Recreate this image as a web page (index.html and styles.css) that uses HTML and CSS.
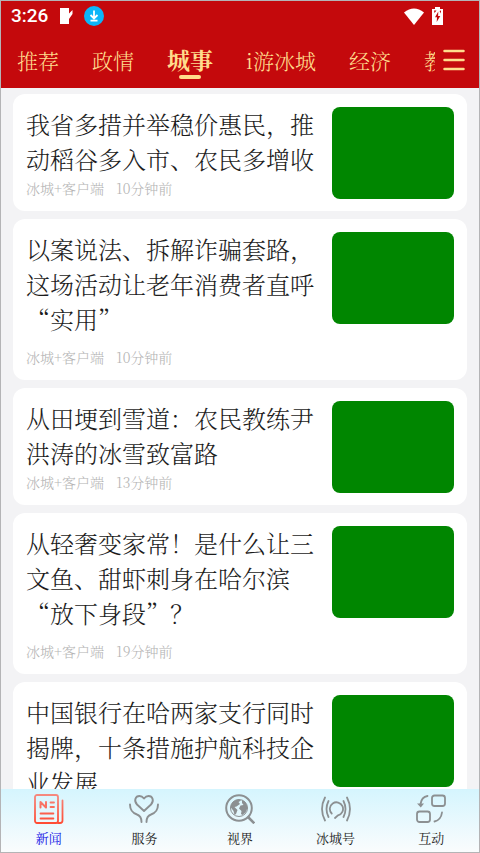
FILE: index.html
```html
<!DOCTYPE html>
<html lang="zh-CN">
<head>
<meta charset="utf-8">
<meta name="viewport" content="width=device-width, initial-scale=1">
<title>城事</title>
<link rel="stylesheet" href="styles.css">
</head>
<body>
<div class="app">
  <header class="header">
    <div class="status">
      <span class="clock">3:26</span>
      <svg class="status-note" viewBox="0 0 14 18" aria-hidden="true"><path d="M0 1h9v5.500L12.500 3v4L9 12v5H0z" fill="#fff"/></svg>
      <svg class="status-download" viewBox="0 0 20 20" aria-hidden="true"><circle cx="10" cy="10" r="10" fill="#0cb6f8"/><path d="M10 4.500v7.500M6.500 9l3.500 3.500L13.500 9M6.500 14.700h7" fill="none" stroke="#fff" stroke-width="1.800"/></svg>
      <svg class="status-wifi" viewBox="0 0 20 17" aria-hidden="true"><path d="M0 4.500Q10-3.500 20 4.500L10 17z" fill="#fff"/></svg>
      <svg class="status-battery" viewBox="0 0 11 18" aria-hidden="true"><path d="M3 0h5v2h3v16H0V2h3z" fill="#fff"/><path d="M2 3.500h2.500L2.500 6zM9 3.500v3L7.500 4zM6.300 4.500L3 10.200h2L4.700 15 8.300 8.900H6.100z" fill="#c4090c"/></svg>
    </div>
    <div class="channels">
      <nav class="tabs" aria-label="频道">
        <a class="tab" href="#">推荐</a>
        <a class="tab" href="#">政情</a>
        <a class="tab tab-active" href="#" aria-current="page">城事</a>
        <a class="tab" href="#">i游冰城</a>
        <a class="tab" href="#">经济</a>
        <a class="tab" href="#">教</a>
      </nav>
      <button class="menu" type="button" aria-label="菜单">
        <svg viewBox="0 0 22 22" aria-hidden="true"><path d="M1.500 2h19M1.500 11h19M1.500 20h19" stroke="#ffdc8c" stroke-width="2.500" stroke-linecap="round"/></svg>
      </button>
    </div>
  </header>

  <main class="feed">
    <article class="card">
      <div class="text">
        <h2 class="title">我省多措并举稳价惠民，推动稻谷多入市、农民多增收</h2>
        <p class="meta"><span>冰城+客户端</span><span>10分钟前</span></p>
      </div>
      <div class="thumb"></div>
    </article>
    <article class="card">
      <div class="text text-long">
        <h2 class="title">以案说法、拆解诈骗套路，这场活动让老年消费者直呼“实用”</h2>
        <p class="meta"><span>冰城+客户端</span><span>10分钟前</span></p>
      </div>
      <div class="thumb"></div>
    </article>
    <article class="card">
      <div class="text">
        <h2 class="title">从田埂到雪道：农民教练尹洪涛的冰雪致富路</h2>
        <p class="meta"><span>冰城+客户端</span><span>13分钟前</span></p>
      </div>
      <div class="thumb"></div>
    </article>
    <article class="card">
      <div class="text text-long">
        <h2 class="title">从轻奢变家常！是什么让三文鱼、甜虾刺身在哈尔滨“放下身段”？</h2>
        <p class="meta"><span>冰城+客户端</span><span>19分钟前</span></p>
      </div>
      <div class="thumb"></div>
    </article>
    <article class="card">
      <div class="text text-long">
        <h2 class="title">中国银行在哈两家支行同时揭牌，十条措施护航科技企业发展</h2>
      </div>
      <div class="thumb"></div>
    </article>
  </main>

  <nav class="dock" aria-label="主导航">
    <a class="dock-item dock-active" href="#" aria-current="page">
      <svg class="dock-icon" viewBox="0 0 30 30" aria-hidden="true">
        <defs><linearGradient id="news" x1="0" y1="0" x2="0" y2="30" gradientUnits="userSpaceOnUse"><stop stop-color="#f58a80"/><stop offset="1" stop-color="#ff4a32"/></linearGradient></defs>
        <g fill="none" stroke="url(#news)" stroke-width="1.800" stroke-linecap="round" stroke-linejoin="round"><rect x="1" y="1" width="23" height="28" rx="2"/><path d="M24 29h2q2.500 0 2.500-2.500V6.500M6.500 19.500h12.900M6.500 24.500h12.900M16.500 8.500h3.500M16.500 13h3.500"/><path d="M6.500 13.500V8l5.500 5.500V8" stroke-width="2"/></g>
      </svg>
      <span>新闻</span>
    </a>
    <a class="dock-item" href="#">
      <svg class="dock-icon" viewBox="0 0 30 30" aria-hidden="true">
        <g fill="none" stroke="#8c9092" stroke-width="1.900" stroke-linecap="round" stroke-linejoin="round"><path d="M15 17L8 10.500C4.500 6.500 6.500 2 10.500 2Q13 2 15 4.500 17 2 19.500 2C23.500 2 25.500 6.500 22 10.500z"/><path d="M1 10.500C1 17 4 19 8 20.500Q12.500 22 12.500 28M29 10.500C29 17 26 19 22 20.500Q17.500 22 17.500 28"/></g>
      </svg>
      <span>服务</span>
    </a>
    <a class="dock-item" href="#">
      <svg class="dock-icon" viewBox="0 0 30 30" aria-hidden="true">
        <g fill="none" stroke="#8c9092"><circle cx="14" cy="14" r="12.800" stroke-width="2"/><circle cx="14" cy="14" r="8.500" stroke-width="1"/><path d="M22.500 22.500L29.300 29.300" stroke-width="2.600"/></g>
        <path d="M5.500 13Q6.500 6.500 13.500 5.300l2.500 1.200-2.500 1.500 1.500 2-3.500 2.500-2 .5 3 3-1.500 4-1.500 1-1-4zM17 6Q22 8 22.500 14l-2 4.500-3 2.500-1.500-1 .5-3-2.500-2.500 1.500-3 3-.5-1.500-2z" fill="#8c9092"/>
      </svg>
      <span>视界</span>
    </a>
    <a class="dock-item" href="#">
      <svg class="dock-icon" viewBox="0 0 30 30" aria-hidden="true">
        <g fill="none" stroke="#8c9092" stroke-width="1.800" stroke-linecap="round"><path d="M10.700 19.500A6.600 6.600 0 1 1 17 21.300L14 24M7.500 7Q3.500 15 7.500 23M4 3.500Q-2 15 4 26.500M22.500 7Q26.500 15 22.500 23M26 3.500Q32 15 26 26.500"/></g>
      </svg>
      <span>冰城号</span>
    </a>
    <a class="dock-item" href="#">
      <svg class="dock-icon" viewBox="0 0 30 30" aria-hidden="true">
        <g fill="none" stroke="#8c9092" stroke-width="1.800" stroke-linecap="round"><rect x="16" y="1.500" width="13" height="10.500" rx="2.500"/><rect x="1" y="17.500" width="13" height="10.500" rx="2.500"/><path d="M11.500 2Q5.500 3 4.500 10M26 18.500Q25 26 18.500 27.500"/></g><path d="M1 9.500h7l-3.200 4z" fill="#8c9092"/>
      </svg>
      <span>互动</span>
    </a>
  </nav>
</div>
</body>
</html>
```
FILE: styles.css
```css
* { box-sizing: border-box; }

body {
  margin: 0;
  font-family: "Noto Serif CJK SC", "Noto Sans CJK SC", serif;
  font-weight: 300;
  text-spacing-trim: space-all;
}

a { color: inherit; text-decoration: none; }

.app {
  display: flex;
  flex-direction: column;
  height: 100vh;
  overflow: hidden;
  border: 1px solid #b4b4b6;
  background: #f3f3f5;
}

.header {
  flex: none;
  background: #c4090c;
  color: #ffdc8c;
}

.status {
  display: flex;
  align-items: center;
  height: 30px;
  padding: 0 36px 0 10px;
}

.clock {
  margin-right: 12px;
  color: #fff;
  font: 500 19px/30px Roboto, sans-serif;
}

.status-note { width: 14px; height: 18px; margin-right: 10px; }
.status-download { width: 20px; height: 20px; }
.status-wifi { width: 20px; height: 17px; margin-left: auto; }
.status-battery { width: 11px; height: 18px; margin-left: 8px; }

.channels {
  display: flex;
  align-items: center;
  height: 57px;
  padding-right: 14px;
}

.tabs {
  display: flex;
  flex: 1;
  align-items: center;
  gap: 33px;
  min-width: 0;
  padding-left: 16px;
  overflow: hidden;
}

.tab {
  flex: none;
  font-size: 21px;
  line-height: 40px;
}

.tab-active {
  position: relative;
  font-size: 23px;
  font-weight: 700;
}

.tab-active::after {
  content: "";
  position: absolute;
  bottom: 1px;
  left: 50%;
  width: 22px;
  height: 4px;
  margin-left: -11px;
  border-radius: 2px;
  background: #ffdc8c;
}

.menu {
  flex: none;
  width: 22px;
  height: 22px;
  margin-left: 8px;
  padding: 0;
  border: 0;
  background: none;
}

.menu svg { display: block; }

.feed {
  display: flex;
  flex: 1;
  flex-direction: column;
  gap: 8px;
  min-height: 0;
  padding: 6px 12px 0;
  overflow: hidden;
}

.card {
  display: flex;
  flex: none;
  align-items: flex-start;
  gap: 16px;
  padding: 12px 13px 11px;
  border-radius: 12px;
  background: #fff;
}

.text {
  display: flex;
  flex: 1;
  flex-direction: column;
  justify-content: space-between;
  min-height: 94px;
}

.text-long { min-height: 138px; }

.title {
  margin: 0;
  color: #1c1c1c;
  font-size: 24px;
  font-weight: 300;
  line-height: 35px;
}

.meta {
  display: flex;
  gap: 12px;
  margin: 0 0 2px;
  color: #b4b4b4;
  font-size: 14px;
  line-height: 20px;
}

.thumb {
  flex: none;
  width: 122px;
  height: 92px;
  margin-top: 1px;
  border-radius: 8px;
  background: #008600;
}

.dock {
  display: grid;
  flex: none;
  grid-template-columns: repeat(5, 1fr);
  height: 63px;
  padding-top: 5px;
  background: linear-gradient(#d5f5fe, #fafcfd);
}

.dock-item {
  display: flex;
  flex-direction: column;
  align-items: center;
  gap: 4px;
  color: #222;
  font-size: 13px;
  font-weight: 400;
  line-height: 20px;
}

.dock-active { color: #1414e6; }
.dock-icon { width: 30px; height: 30px; }
```
